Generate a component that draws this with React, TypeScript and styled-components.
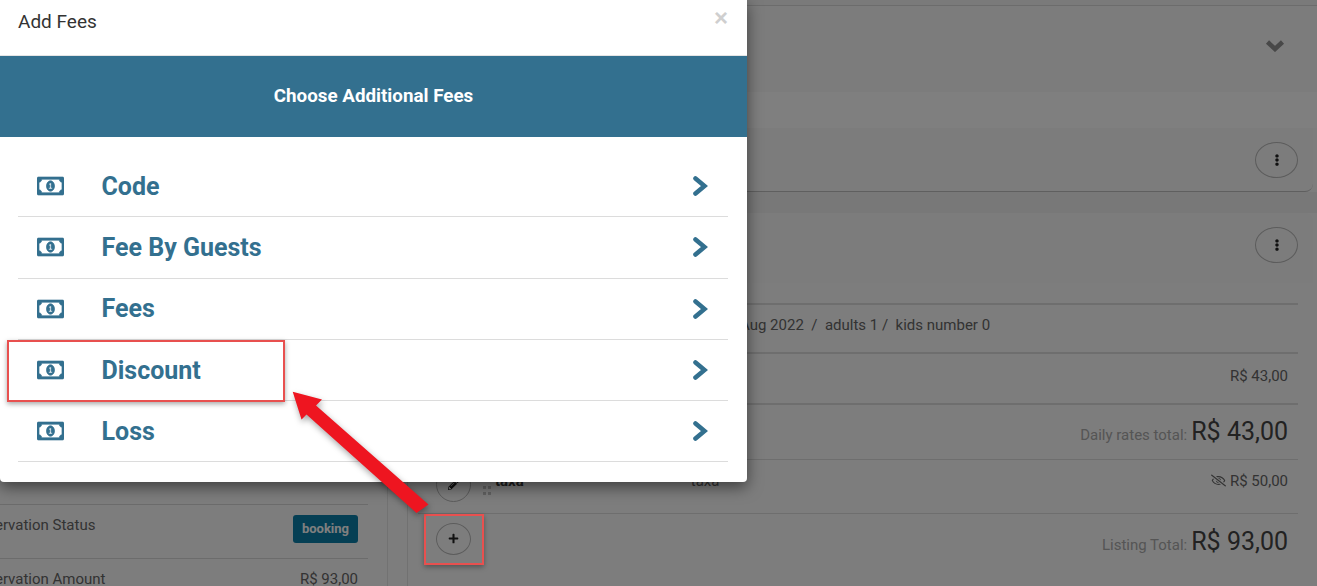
import React from "react";
import styled, { createGlobalStyle } from "styled-components";
import { FaEllipsisV, FaPencilAlt, FaPlus, FaRegEyeSlash, FaRegMoneyBillAlt } from "react-icons/fa";

const GlobalStyle = createGlobalStyle`
  html, body {
    margin: 0;
    padding: 0;
    height: 100%;
    overflow: hidden;
    font-family: "Roboto", "Liberation Sans", sans-serif;
    background: #fbfbfb;
  }
`;

const Page = styled.div`
  position: relative;
  display: grid;
  grid-template-columns: 388px 1fr;
  width: 1317px;
  height: 586px;
  overflow: hidden;
  background: #fbfbfb;
`;

const LeftColumn = styled.aside`
  display: flex;
  flex-direction: column;
  padding-top: 504px;
  border-right: 1px solid #e4e4e4;
  box-sizing: border-box;
`;

const SummaryRow = styled.div`
  display: flex;
  justify-content: space-between;
  align-items: flex-start;
  flex: none;
  box-sizing: border-box;
  width: 378px;
  height: 54px;
  margin-left: -10px;
  padding: 11px 10px 0 0;
  border-top: 1px solid #d8d8d8;
  font-size: 15px;
  line-height: 18px;
  color: #666;
`;

const SummaryLabel = styled.span`
  margin-left: -20px;
  white-space: nowrap;
`;

const Badge = styled.span`
  margin-top: -1px;
  padding: 5px 9px;
  border-radius: 3px;
  background: #0b7ea8;
  color: #fff;
  font-size: 13px;
  font-weight: 700;
  line-height: 18px;
`;

const RightColumn = styled.main`
  display: flex;
  flex-direction: column;
  padding: 0 4px 0 19px;
`;

const TopStrip = styled.div`
  height: 5px;
  margin: 0 -4px 0 -19px;
  border-bottom: 1px solid #d9d9d9;
  background: #f4f4f4;
`;

const CollapsedHeader = styled.div`
  display: flex;
  justify-content: flex-end;
  align-items: center;
  height: 86px;
  margin-right: -4px;
  padding: 0 32px 8px 0;
  box-sizing: border-box;
  background: #f8f8f8;
`;

const ChevronDown = styled.svg`
  width: 20px;
  height: 13px;
  fill: none;
  stroke: #909090;
  stroke-width: 4.5;
`;

const LightBand = styled.div`
  height: 36px;
  margin-right: -4px;
  background: #ffffff;
`;

const MenuHeader = styled.div<{ $height: number; $rounded?: boolean }>`
  display: flex;
  justify-content: flex-end;
  align-items: center;
  height: ${(p) => p.$height}px;
  padding: ${(p) => (p.$rounded ? "1px 15px 0 0" : "0 15px 6px 0")};
  box-sizing: border-box;
  background: #f8f8f8;
  border-radius: ${(p) => (p.$rounded ? "0 0 8px 8px" : "8px 8px 0 0")};
  border-bottom: ${(p) => (p.$rounded ? "1px solid #bfbfbf" : "none")};
`;

const RoundButton = styled.button<{ $h?: number; $offset?: number }>`
  display: flex;
  flex: none;
  align-items: center;
  justify-content: center;
  width: 35px;
  height: ${(p) => p.$h ?? 35}px;
  margin-top: ${(p) => p.$offset ?? 0}px;
  padding: 0;
  border: 1px solid #b8b8b8;
  border-radius: 50%;
  background: transparent;
  color: #222;
  font-size: 11px;
`;

const WideButton = styled(RoundButton)`
  width: 43px;
  height: 36px;
  font-size: 12px;
`;

const Gap = styled.div`
  height: 21px;
  margin-right: -4px;
  background: #f1f1f1;
`;

const ListingCard = styled.section`
  display: flex;
  flex-direction: column;
  flex: 1;
  border-left: 1px solid #e2e2e2;
  border-radius: 8px 8px 0 8px;
`;

const ListingBody = styled.div`
  padding: 20px 15px 0 10px;
`;

const Line = styled.div<{ $height: number; $thick?: boolean; $lift?: number }>`
  display: flex;
  align-items: center;
  justify-content: space-between;
  box-sizing: border-box;
  height: ${(p) => p.$height}px;
  border-top: ${(p) => (p.$thick ? 2 : 1)}px solid #dcdcdc;
  padding: 0 10px ${(p) => p.$lift ?? 0}px 0;
`;

const DatesText = styled.div`
  margin-left: 322px;
  font-size: 15px;
  color: #666;
  white-space: pre;
`;

const SmallAmount = styled.div`
  display: flex;
  align-items: center;
  gap: 4px;
  margin-left: auto;
  font-size: 15px;
  color: #666;
`;

const TotalLine = styled.div`
  display: flex;
  align-items: baseline;
  gap: 4px;
  margin-left: auto;
  font-size: 15px;
  color: #aaa;
`;

const TotalValue = styled.span`
  font-size: 25px;
  color: #444;
`;

const FeeCell = styled.div<{ $lift?: number }>`
  display: flex;
  align-items: center;
  padding-left: 18px;
  margin-bottom: ${(p) => p.$lift ?? 0}px;
`;

const Grip = styled.svg`
  flex: none;
  width: 8px;
  height: 9px;
  margin: 19px 4px 0 12px;
  fill: #c4c4c4;
`;

const FeeName = styled.span`
  font-size: 15px;
  font-weight: 700;
  color: #3f3f3f;
`;

const FeeType = styled.span`
  margin-left: 167px;
  font-size: 15px;
  color: #666;
`;

const Backdrop = styled.div`
  position: absolute;
  inset: 0;
  background: rgba(0, 0, 0, 0.5);
`;

const Modal = styled.div`
  position: absolute;
  top: 0;
  left: 0;
  width: 747px;
  height: 482px;
  background: #fff;
  border-radius: 0 0 4px 4px;
  box-shadow: 0 5px 15px rgba(0, 0, 0, 0.5);
`;

const ModalHeader = styled.header`
  display: flex;
  justify-content: space-between;
  height: 56px;
  padding: 11px 19px 0 18px;
  box-sizing: border-box;
  border-bottom: 1px solid #e5e5e5;
`;

const ModalTitle = styled.h4`
  margin: 0;
  font-size: 19px;
  font-weight: 400;
  line-height: 21px;
  color: #333;
`;

const CloseMark = styled.span`
  margin-top: -4px;
  font-family: "Liberation Sans", sans-serif;
  font-size: 24px;
  font-weight: 700;
  line-height: 22px;
  color: #cfcfcf;
`;

const Banner = styled.div`
  display: flex;
  align-items: center;
  justify-content: center;
  height: 81px;
  padding-bottom: 2px;
  box-sizing: border-box;
  background: #33708f;
  color: #fff;
  font-size: 18.8px;
  font-weight: 700;
`;

const FeeList = styled.ul`
  list-style: none;
  margin: 0;
  padding: 19px 19px 0 18px;
`;

const FeeRow = styled.li`
  display: flex;
  align-items: center;
  box-sizing: border-box;
  height: 61.3px;
  padding: 0 20px 0 19px;
  border-bottom: 1px solid #dcdcdc;
  color: #33708f;
`;

const FeeIcon = styled(FaRegMoneyBillAlt)`
  width: 27px;
  height: 24px;
  stroke: currentColor;
  stroke-width: 14;
`;

const FeeLabel = styled.span`
  flex: 1;
  margin-left: 37.5px;
  font-size: 25px;
  font-weight: 700;
`;

const FeeChevron = styled.svg`
  width: 16px;
  height: 22px;
  fill: none;
  stroke: currentColor;
  stroke-width: 4.6;
  stroke-linecap: round;
`;

const Highlight = styled.div<{ $x: number; $y: number; $w: number; $h: number }>`
  position: absolute;
  left: ${(p) => p.$x}px;
  top: ${(p) => p.$y}px;
  width: ${(p) => p.$w}px;
  height: ${(p) => p.$h}px;
  box-sizing: border-box;
  border: 2.5px solid #e8504f;
  box-shadow: 0 2px 5px rgba(0, 0, 0, 0.35);
`;

const ArrowLayer = styled.svg`
  position: absolute;
  inset: 0;
  width: 1317px;
  height: 586px;
  pointer-events: none;
  filter: drop-shadow(1px 3px 3px rgba(0, 0, 0, 0.35));
`;

const fees = ["Code", "Fee By Guests", "Fees", "Discount", "Loss"];

export default function App() {
  return (
    <>
      <GlobalStyle />
      <Page>
        <LeftColumn>
          <SummaryRow>
            <SummaryLabel>Reservation Status</SummaryLabel>
            <Badge>booking</Badge>
          </SummaryRow>
          <SummaryRow>
            <SummaryLabel>Reservation Amount</SummaryLabel>
            <span>R$ 93,00</span>
          </SummaryRow>
        </LeftColumn>
        <RightColumn>
          <TopStrip />
          <CollapsedHeader>
            <ChevronDown viewBox="0 0 20 13">
              <polyline points="2.5,3 10,10 17.5,3" />
            </ChevronDown>
          </CollapsedHeader>
          <LightBand />
          <MenuHeader $height={64} $rounded>
            <WideButton>
              <FaEllipsisV />
            </WideButton>
          </MenuHeader>
          <Gap />
          <ListingCard>
            <MenuHeader $height={70}>
              <WideButton>
                <FaEllipsisV />
              </WideButton>
            </MenuHeader>
            <ListingBody>
              <Line $height={49} $thick $lift={8}>
                <DatesText>{"Aug 2022  /  adults 1 /  kids number 0"}</DatesText>
              </Line>
              <Line $height={51} $thick $lift={6}>
                <SmallAmount>R$ 43,00</SmallAmount>
              </Line>
              <Line $height={56} $thick $lift={2}>
                <TotalLine>
                  Daily rates total: <TotalValue>R$ 43,00</TotalValue>
                </TotalLine>
              </Line>
              <Line $height={54} $lift={12}>
                <FeeCell>
                  <RoundButton $offset={7}>
                    <FaPencilAlt />
                  </RoundButton>
                  <Grip viewBox="0 0 8 9">
                    <rect width="3" height="3" />
                    <rect x="5" width="3" height="3" />
                    <rect y="6" width="3" height="3" />
                    <rect x="5" y="6" width="3" height="3" />
                  </Grip>
                  <FeeName>taxa</FeeName>
                  <FeeType>taxa</FeeType>
                </FeeCell>
                <SmallAmount>
                  <FaRegEyeSlash />
                  R$ 50,00
                </SmallAmount>
              </Line>
              <Line $height={56}>
                <FeeCell $lift={6}>
                  <RoundButton $h={32}>
                    <FaPlus />
                  </RoundButton>
                </FeeCell>
                <TotalLine>
                  Listing Total: <TotalValue>R$ 93,00</TotalValue>
                </TotalLine>
              </Line>
            </ListingBody>
          </ListingCard>
        </RightColumn>
        <Backdrop />
        <Modal>
          <ModalHeader>
            <ModalTitle>Add Fees</ModalTitle>
            <CloseMark>×</CloseMark>
          </ModalHeader>
          <Banner>Choose Additional Fees</Banner>
          <FeeList>
            {fees.map((fee) => (
              <FeeRow key={fee}>
                <FeeIcon preserveAspectRatio="none" />
                <FeeLabel>{fee}</FeeLabel>
                <FeeChevron viewBox="0 0 16 22">
                  <polyline points="3.5,3.5 12.5,11 3.5,18.5" />
                </FeeChevron>
              </FeeRow>
            ))}
          </FeeList>
        </Modal>
        <Highlight $x={7} $y={340} $w={278} $h={62} />
        <Highlight $x={424} $y={514} $w={60} $h={51} />
        <ArrowLayer viewBox="0 0 1317 586">
          <polygon
            points="292.7,391.7 322,399.5 316,405.5 428.5,504.5 416.5,513 306.5,414.5 301.5,419.5"
            fill="#ee1520"
          />
        </ArrowLayer>
      </Page>
    </>
  );
}
